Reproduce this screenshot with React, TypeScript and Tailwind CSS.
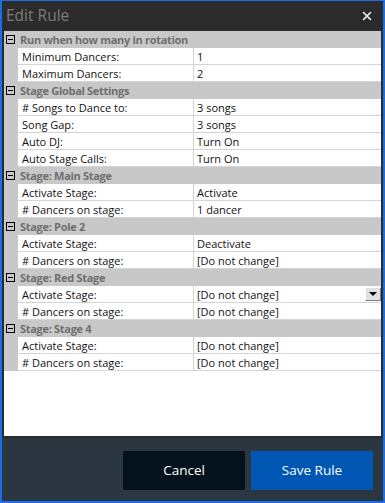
import { X } from "lucide-react";

type GridRow = { label: string; value: string; dropdown?: boolean };
type Section = { title: string; rows: GridRow[] };

const sections: Section[] = [
  {
    title: "Run when how many in rotation",
    rows: [
      { label: "Minimum Dancers:", value: "1" },
      { label: "Maximum Dancers:", value: "2" },
    ],
  },
  {
    title: "Stage Global Settings",
    rows: [
      { label: "# Songs to Dance to:", value: "3 songs" },
      { label: "Song Gap:", value: "3 songs" },
      { label: "Auto DJ:", value: "Turn On" },
      { label: "Auto Stage Calls:", value: "Turn On" },
    ],
  },
  {
    title: "Stage: Main Stage",
    rows: [
      { label: "Activate Stage:", value: "Activate" },
      { label: "# Dancers on stage:", value: "1 dancer" },
    ],
  },
  {
    title: "Stage: Pole 2",
    rows: [
      { label: "Activate Stage:", value: "Deactivate" },
      { label: "# Dancers on stage:", value: "[Do not change]" },
    ],
  },
  {
    title: "Stage: Red Stage",
    rows: [
      { label: "Activate Stage:", value: "[Do not change]", dropdown: true },
      { label: "# Dancers on stage:", value: "[Do not change]" },
    ],
  },
  {
    title: "Stage: Stage 4",
    rows: [
      { label: "Activate Stage:", value: "[Do not change]" },
      { label: "# Dancers on stage:", value: "[Do not change]" },
    ],
  },
];

function SectionHeader({ title }: { title: string }) {
  return (
    <div className="flex h-[17px] items-center bg-[#c8c8c8]">
      <div className="ml-[2px] flex h-[9px] w-[9px] items-center justify-center border border-black">
        <div className="h-px w-[5px] bg-black" />
      </div>
      <span className="ml-[5px] text-[11px] font-bold leading-none tracking-[-0.3px] text-[#6e6e6e]">
        {title}
      </span>
    </div>
  );
}

function PropertyRow({ row }: { row: GridRow }) {
  return (
    <div className="flex h-[17px]">
      <div className="w-[14px] shrink-0 bg-[#c8c8c8]" />
      <div className="flex flex-1 border-b border-[#d4d4d4]">
        <div className="flex w-[176px] shrink-0 items-center border-r border-[#d4d4d4] pl-[4px] text-[11px] leading-none text-[#111]">
          {row.label}
        </div>
        <div className="flex flex-1 items-center pl-[3px] text-[11px] leading-none text-[#111]">
          <span className="flex-1">{row.value}</span>
          {row.dropdown && (
            <div className="flex h-[14px] w-[16px] items-center justify-center border border-b-[#7a7a7a] border-l-white border-r-[#7a7a7a] border-t-white bg-[#e1e1e1]">
              <div className="h-0 w-0 border-l-[4px] border-r-[4px] border-t-[4px] border-l-transparent border-r-transparent border-t-black" />
            </div>
          )}
        </div>
      </div>
    </div>
  );
}

export default function App() {
  return (
    <div className="flex h-[503px] w-[385px] flex-col border-b-2 border-l-2 border-r-2 border-t border-[#1c6ee4] bg-[#2b2b2b] font-['Open_Sans','Noto_Sans',sans-serif]">
      {/* Title bar */}
      <div className="flex h-[30px] shrink-0 items-center justify-between pl-[4px] pr-[9px]">
        <span className="text-[15.5px] leading-none text-[#7d7d7d]">Edit Rule</span>
        <X className="h-[14px] w-[14px] text-white" strokeWidth={2.5} />
      </div>

      {/* Property grid */}
      <div className="mx-[2px] h-[405px] shrink-0 bg-white">
        {sections.map((section) => (
          <div key={section.title}>
            <SectionHeader title={section.title} />
            {section.rows.map((row, i) => (
              <PropertyRow key={i} row={row} />
            ))}
          </div>
        ))}
      </div>

      {/* Footer */}
      <div className="mt-[2px] flex flex-1 items-start justify-end gap-[6px] bg-[#2b3640] pr-[10px] pt-[13px]">
        <button className="h-[39px] w-[122px] bg-[#04121e] text-[13.5px] text-white">
          Cancel
        </button>
        <button className="h-[39px] w-[122px] bg-[#0056b3] text-[13.5px] text-white">
          Save Rule
        </button>
      </div>
    </div>
  );
}
